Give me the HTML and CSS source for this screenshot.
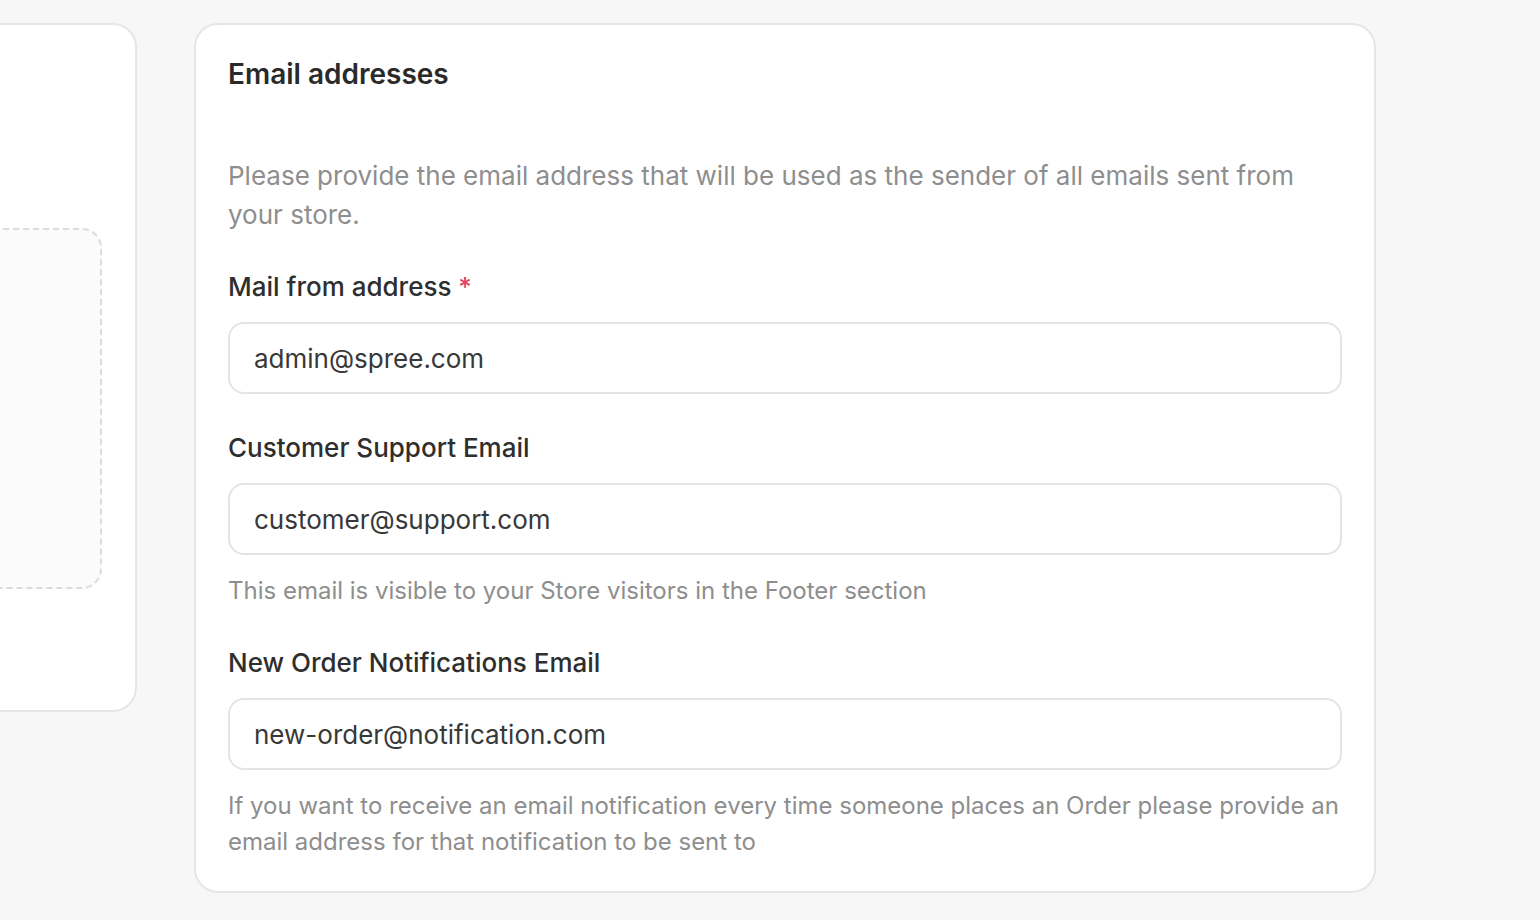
FILE: index.html
```html
<!DOCTYPE html>
<html lang="en">
<head>
<meta charset="utf-8">
<title>Email addresses</title>
<link rel="stylesheet" href="styles.css">
</head>
<body>
<div class="layout">
  <aside class="card side-card">
    <div class="side-spacer"></div>
    <div class="dropzone"></div>
  </aside>
  <section class="card main-card">
    <h2 class="card-title">Email addresses</h2>
    <p class="card-desc">Please provide the email address that will be used as the sender of all emails sent from your store.</p>
    <div class="field">
      <label class="field-label">Mail from address <span class="req">*</span></label>
      <div class="input">admin@spree.com</div>
    </div>
    <div class="field">
      <label class="field-label">Customer Support Email</label>
      <div class="input">customer@support.com</div>
      <p class="help">This email is visible to your Store visitors in the Footer section</p>
    </div>
    <div class="field last">
      <label class="field-label">New Order Notifications Email</label>
      <div class="input">new-order@notification.com</div>
      <p class="help">If you want to receive an email notification every time someone places an Order please provide an email address for that notification to be sent to</p>
    </div>
  </section>
</div>
</body>
</html>
```
FILE: styles.css
```css
* { box-sizing: border-box; }
html, body { margin: 0; padding: 0; }
body {
  background: #f7f7f7;
  font-family: Inter, "Noto Sans", "Liberation Sans", sans-serif;
  color: #2b2b2b;
  overflow: hidden;
  height: 920px;
}
.layout {
  display: flex;
  align-items: flex-start;
  gap: 57px;
  padding-top: 23px;
  margin-left: -400px;
}
.card {
  background: #fff;
  border: 2px solid #e6e6e6;
  border-radius: 24px;
}
.side-card {
  flex: 0 0 537px;
  height: 689px;
  padding: 0 33px 0 32px;
  display: flex;
  flex-direction: column;
}
.side-spacer { height: 203px; }
.dropzone {
  height: 361px;
  border: 2px dashed #dcdcdc;
  border-radius: 20px;
  background: #fbfbfb;
}
.main-card {
  flex: 0 0 1182px;
  padding: 31px 32px 31px 32px;
}
.card-title {
  margin: 0;
  font-size: 28px;
  font-weight: 600;
  line-height: 36px;
  color: #2a2a2a;
}
.card-desc {
  margin: 64px 0 33px;
  max-width: 1090px;
  font-size: 26px;
  line-height: 39px;
  color: #8e8e8e;
}
.field { margin-bottom: 34px; }
.field.last { margin-bottom: 0; }
.field-label {
  display: block;
  font-size: 26px;
  font-weight: 500;
  line-height: 39px;
  color: #2e2e2e;
  margin-bottom: 16px;
}
.req { color: #e0435f; }
.input {
  height: 72px;
  border: 2px solid #e4e4e4;
  border-radius: 16px;
  padding: 0 24px;
  display: flex;
  align-items: center;
  font-size: 26px;
  color: #383838;
  background: #fff;
}
.help {
  margin: 18px 0 0;
  font-size: 24px;
  line-height: 36px;
  color: #8e8e8e;
}
```
